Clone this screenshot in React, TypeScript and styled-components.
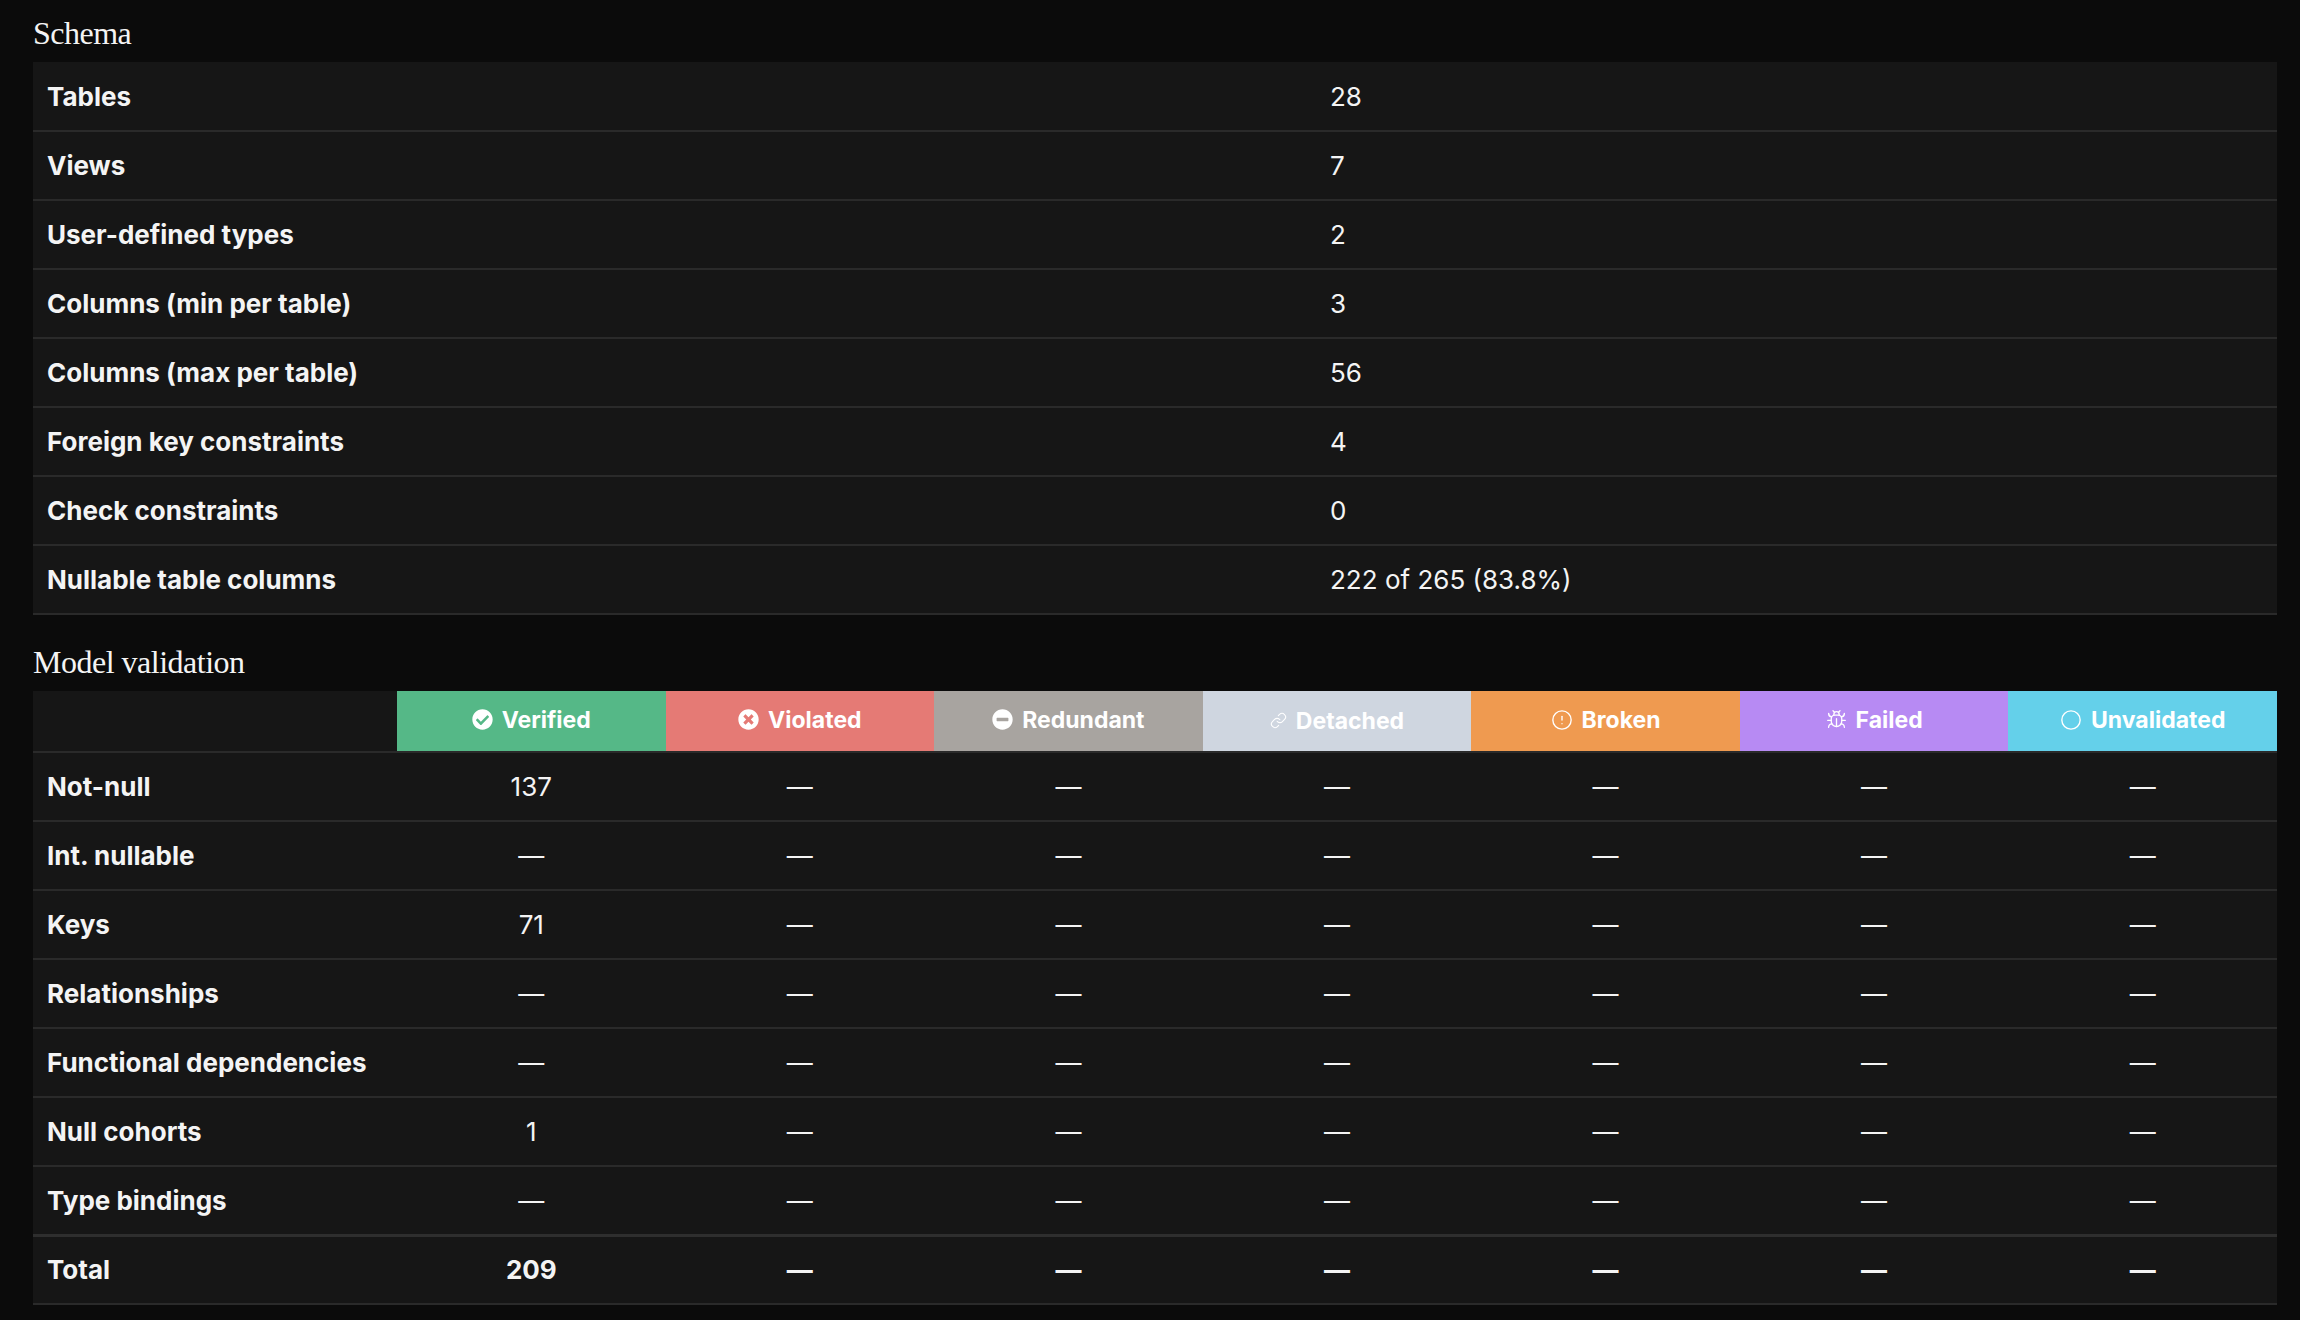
import React from "react";
import styled, { createGlobalStyle } from "styled-components";
import { FaCheckCircle, FaTimesCircle, FaMinusCircle } from "react-icons/fa";
import { Link, CircleAlert, Bug, Circle } from "lucide-react";

const Global = createGlobalStyle`
  html, body { margin: 0; background: #0b0b0b; }
  body { font-family: Inter, "Noto Sans", sans-serif; color: #f4f4f4; }
`;

const Page = styled.div`
  padding: 4px 23px 0 33px;
`;

const Heading = styled.h2`
  font-family: "Liberation Serif", "DejaVu Serif", serif;
  font-weight: 400;
  font-size: 32px;
  margin: 0;
  height: 58px;
  display: flex;
  align-items: center;
  letter-spacing: -0.5px;
`;

const Table = styled.table`
  width: 100%;
  border-collapse: collapse;
  background: #161616;
  table-layout: fixed;
`;

const Row = styled.tr<{ $total?: boolean }>`
  height: 69px;
  border-bottom: 2px solid #2a2a2a;
  ${(p) => (p.$total ? "border-top: 3px solid #2e2e2e;" : "")}
`;

const Label = styled.td`
  font-weight: 700;
  font-size: 26px;
  padding: 0 14px;
  width: 336px;
`;

const Value = styled.td<{ $bold?: boolean; $center?: boolean }>`
  font-size: 26px;
  font-weight: ${(p) => (p.$bold ? 700 : 400)};
  text-align: ${(p) => (p.$center ? "center" : "left")};
  padding: 0 14px;
`;

const HeadRow = styled.tr`
  height: 61px;
  border-bottom: 2px solid #2a2a2a;
`;

const HeadCell = styled.th<{ $bg: string }>`
  background: ${(p) => p.$bg};
  padding: 0;
  font-size: 23px;
  font-weight: 700;
  color: #fff;
`;

const HeadInner = styled.span`
  display: inline-flex;
  align-items: center;
  gap: 9px;
`;

const schemaRows: [string, string][] = [
  ["Tables", "28"],
  ["Views", "7"],
  ["User-defined types", "2"],
  ["Columns (min per table)", "3"],
  ["Columns (max per table)", "56"],
  ["Foreign key constraints", "4"],
  ["Check constraints", "0"],
  ["Nullable table columns", "222 of 265 (83.8%)"],
];

const heads = [
  { name: "Verified", bg: "#55b887", icon: <FaCheckCircle size={21} /> },
  { name: "Violated", bg: "#e57a75", icon: <FaTimesCircle size={21} /> },
  { name: "Redundant", bg: "#a8a4a0", icon: <FaMinusCircle size={21} /> },
  { name: "Detached", bg: "#cfd6e0", icon: <Link size={17} strokeWidth={1.5} /> },
  { name: "Broken", bg: "#ef9a50", icon: <CircleAlert size={22} strokeWidth={1.5} /> },
  { name: "Failed", bg: "#b78af3", icon: <Bug size={21} strokeWidth={1.5} /> },
  { name: "Unvalidated", bg: "#64d0ea", icon: <Circle size={22} strokeWidth={1.5} /> },
];

const D = "—";
const modelRows: [string, string][] = [
  ["Not-null", "137"],
  ["Int. nullable", D],
  ["Keys", "71"],
  ["Relationships", D],
  ["Functional dependencies", D],
  ["Null cohorts", "1"],
  ["Type bindings", D],
];

export default function App() {
  return (
    <Page>
      <Global />
      <Heading>Schema</Heading>
      <Table>
        <colgroup>
          <col style={{ width: 1283 }} />
          <col />
        </colgroup>
        <tbody>
          {schemaRows.map(([l, v]) => (
            <Row key={l}>
              <Label>{l}</Label>
              <Value>{v}</Value>
            </Row>
          ))}
        </tbody>
      </Table>
      <Heading style={{ marginTop: 18 }}>Model validation</Heading>
      <Table>
        <colgroup>
          <col style={{ width: 364 }} />
          {heads.map((h) => (
            <col key={h.name} />
          ))}
        </colgroup>
        <thead>
          <HeadRow>
            <th />
            {heads.map((h) => (
              <HeadCell key={h.name} $bg={h.bg}>
                <HeadInner>
                  {h.icon}
                  {h.name}
                </HeadInner>
              </HeadCell>
            ))}
          </HeadRow>
        </thead>
        <tbody>
          {modelRows.map(([l, v]) => (
            <Row key={l}>
              <Label>{l}</Label>
              <Value $center>{v}</Value>
              {heads.slice(1).map((h) => (
                <Value $center key={h.name}>{D}</Value>
              ))}
            </Row>
          ))}
          <Row $total>
            <Label>Total</Label>
            <Value $center $bold>209</Value>
            {heads.slice(1).map((h) => (
              <Value $center $bold key={h.name}>{D}</Value>
            ))}
          </Row>
        </tbody>
      </Table>
    </Page>
  );
}
